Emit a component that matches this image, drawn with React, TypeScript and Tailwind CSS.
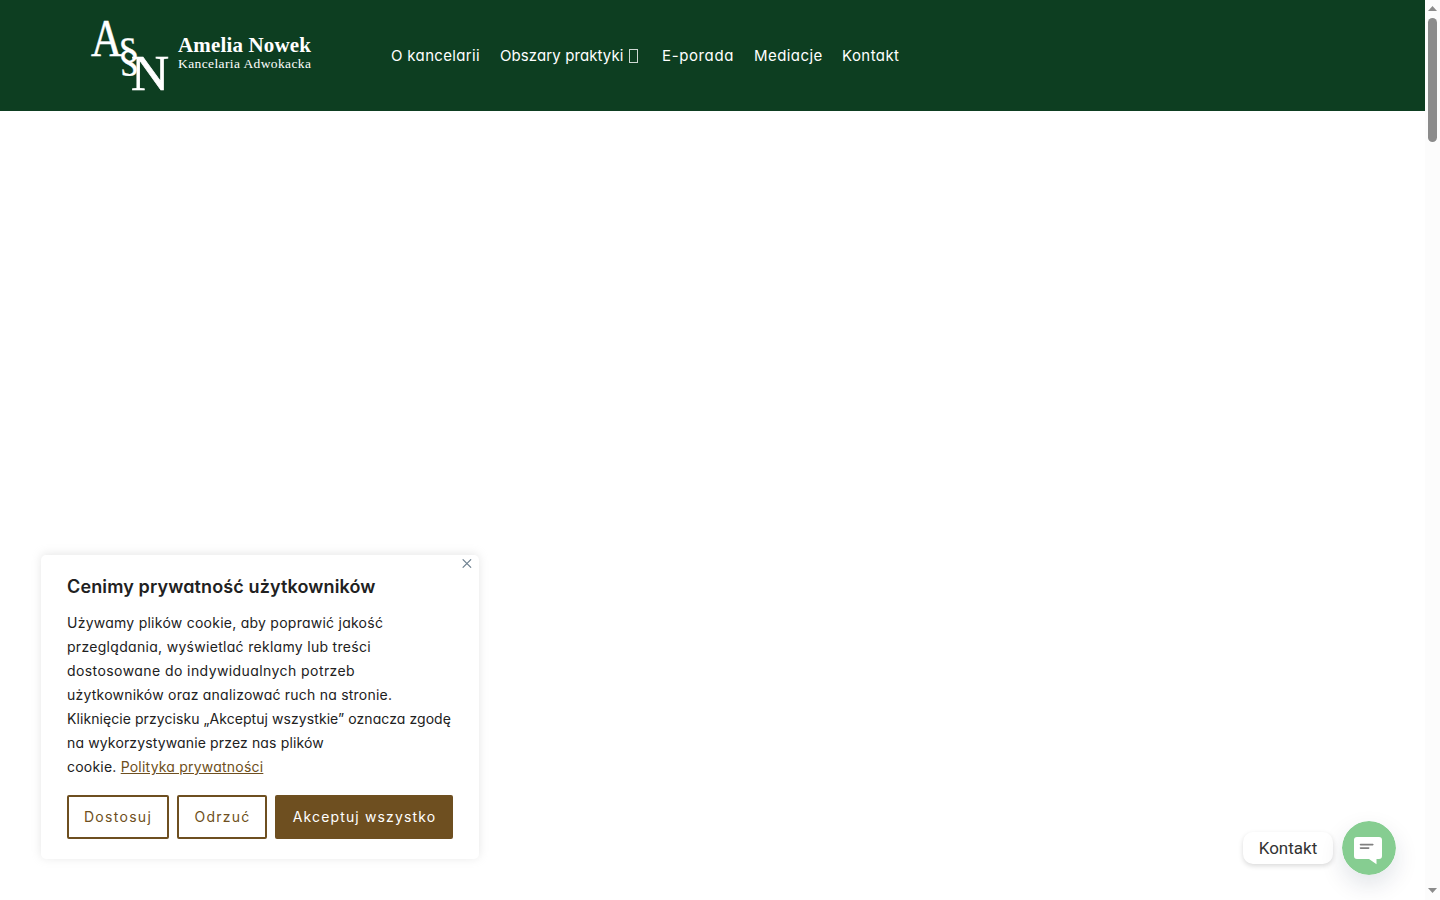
import React from 'react';

interface TextItem {
  text: string;
  className: string;
}

const navItems: (TextItem & { hasSubmenu?: boolean })[] = [
  { text: 'O kancelarii', className: 'w-[89px] tracking-[0.34px]' },
  { text: 'Obszary praktyki', className: 'w-[142px] tracking-[0.1px]', hasSubmenu: true },
  { text: 'E-porada', className: 'w-[72px] tracking-[0.62px]' },
  { text: 'Mediacje', className: 'w-[68px] tracking-[0.42px]' },
  { text: 'Kontakt', className: 'w-[58px] tracking-[0.43px]' },
];

const consentLines: TextItem[] = [
  { text: 'Używamy plików cookie, aby poprawić jakość', className: 'tracking-[0.25px]' },
  { text: 'przeglądania, wyświetlać reklamy lub treści', className: 'tracking-[0.3px]' },
  { text: 'dostosowane do indywidualnych potrzeb', className: 'tracking-[0.42px]' },
  { text: 'użytkowników oraz analizować ruch na stronie.', className: 'tracking-[0.22px]' },
  { text: 'Kliknięcie przycisku „Akceptuj wszystkie” oznacza zgodę', className: 'tracking-[0.07px]' },
  { text: 'na wykorzystywanie przez nas plików', className: 'tracking-[0.14px]' },
];

const Logo: React.FC = () => (
  <svg width="222" height="81" viewBox="90 15 222 81" className="shrink-0 overflow-visible">
    <g fill="#fff" stroke="#fff" fontFamily="Liberation Serif, serif">
      <text x="91" y="56" fontSize="53" strokeWidth="0.5" textLength="31" lengthAdjust="spacingAndGlyphs">A</text>
      <text x="0" y="0" fontSize="47" strokeWidth="0.3" transform="translate(118.5 70) skewX(3) scale(0.94 1)">§</text>
      <text x="131" y="90" fontSize="50" strokeWidth="0.7" textLength="38" lengthAdjust="spacingAndGlyphs">N</text>
      <text x="178" y="52" fontSize="21" fontWeight="bold" strokeWidth="0" textLength="133">Amelia Nowek</text>
      <text x="178" y="68" fontSize="13.5" strokeWidth="0" textLength="133">Kancelaria Adwokacka</text>
    </g>
  </svg>
);

const Header: React.FC = () => (
  <header className="flex h-[111px] items-center bg-[#0d3e21] pl-[90px] text-white">
    <Logo />
    <nav className="ml-[79px] flex gap-5 text-[15px] leading-6">
      {navItems.map((item) => (
        <a key={item.text} href="#" className={`flex items-center whitespace-nowrap ${item.className}`}>
          {item.text}
          {item.hasSubmenu && <span className="ml-[5px] mt-px h-[14px] w-[9px] border border-white/80" />}
        </a>
      ))}
    </nav>
  </header>
);

const CookieConsent: React.FC = () => (
  <section className="absolute left-[41px] top-[555px] h-[304px] w-[438px] rounded-[5px] bg-white px-[26px] pt-5 text-[#212121] shadow-[0_-1px_10px_0_rgba(172,171,171,0.3)]">
    <button className="absolute right-[7px] top-1 p-0">
      <svg width="10" height="9" viewBox="0 0 10 9" fill="none" stroke="#6c7f8e" strokeWidth="1.1">
        <path d="M0.7 0.3l8.4 8.4M9.1 0.3L0.7 8.7" />
      </svg>
    </button>
    <h2 className="mb-3 whitespace-nowrap text-[18px] font-semibold leading-6 tracking-[0.13px]">
      Cenimy prywatność użytkowników
    </h2>
    <div className="whitespace-nowrap text-sm leading-6">
      {consentLines.map((line) => (
        <p key={line.text} className={line.className}>{line.text}</p>
      ))}
      <p className="tracking-[0.21px]">
        cookie. <a href="#" className="text-[#6e4f20] underline">Polityka prywatności</a>
      </p>
    </div>
    <div className="mt-4 flex gap-2 text-sm">
      <button className="h-11 w-[102px] rounded-xs border-2 border-[#6e4f20] text-[#6e4f20] tracking-[1.3px]">Dostosuj</button>
      <button className="h-11 w-[90px] rounded-xs border-2 border-[#6e4f20] pl-px text-[#6e4f20] tracking-[1.2px]">Odrzuć</button>
      <button className="h-11 w-[178px] rounded-xs bg-[#6e4f20] pl-px text-white tracking-[1.15px]">Akceptuj wszystko</button>
    </div>
  </section>
);

const ChatWidget: React.FC = () => (
  <div className="absolute left-[1243px] top-[821px] flex items-center gap-[9px]">
    <div className="flex h-8 w-[90px] items-center justify-center rounded-[10px] bg-white pt-px font-['Roboto',sans-serif] text-[17px] text-[#333] shadow-[0_2px_5px_rgba(0,0,0,0.15)]">
      Kontakt
    </div>
    <svg width="54" height="54" viewBox="0 0 54 54" className="rounded-full shadow-[0_10px_24px_rgba(9,31,67,0.12)]">
      <circle cx="27" cy="27" r="27" fill="#86cd91" />
      <path d="M15 16h22a3 3 0 0 1 3 3v16a3 3 0 0 1-3 3h-2.5v5.2L27 38H15a3 3 0 0 1-3-3V19a3 3 0 0 1 3-3z" fill="#fff" />
      <path d="M18.5 23.6h12.3M18.5 27.1h8.2" stroke="#808080" strokeWidth="1.6" strokeLinecap="round" />
    </svg>
  </div>
);

const Scrollbar: React.FC = () => (
  <div className="flex w-[15px] flex-col items-center justify-between bg-[#fcfcfc] py-[6px]">
    <div className="flex flex-col items-center gap-[7px]">
      <svg width="9" height="5"><path d="M4.5 0L9 5H0z" fill="#8b8b8b" /></svg>
      <div className="h-[124px] w-[9px] rounded-full bg-[#8b8b8b]" />
    </div>
    <svg width="9" height="5" className="mb-px"><path d="M0 0h9L4.5 5z" fill="#8b8b8b" /></svg>
  </div>
);

const App: React.FC = () => {
  return (
    <div className="relative flex h-[900px] w-[1440px] overflow-hidden bg-white font-['Inter',sans-serif] [font-feature-settings:'cv11']">
      <main className="flex-1">
        <Header />
      </main>
      <Scrollbar />
      <CookieConsent />
      <ChatWidget />
    </div>
  );
};

export default App;
